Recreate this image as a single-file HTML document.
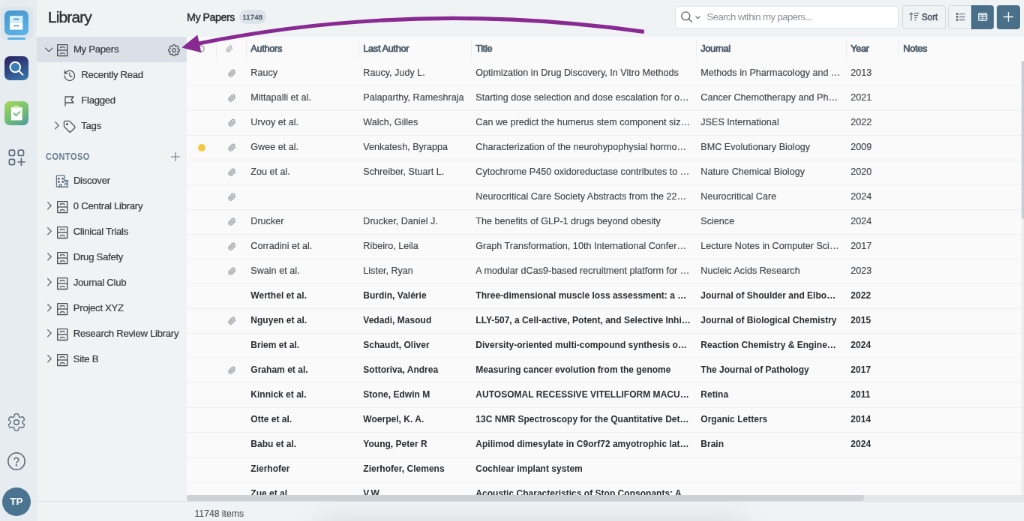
<!DOCTYPE html>
<html><head><meta charset="utf-8">
<style>
*{box-sizing:border-box;margin:0;padding:0}
html,body{width:1024px;height:521px;overflow:hidden;background:#eff3f4}
body{font-family:"Liberation Sans",sans-serif;position:relative}
#root{position:absolute;left:0;top:0;width:1365.33px;height:694.67px;transform:scale(0.75);transform-origin:0 0;overflow:hidden;background:#eff3f4;will-change:transform}
.abs{position:absolute}
.t{position:absolute;white-space:nowrap;line-height:1}
.ic{position:absolute;overflow:visible}
#table{position:absolute;left:249px;top:49px;width:1116.33px;height:619px;background:#fafafa;overflow:hidden}
.row{position:absolute;left:0;width:1116.33px;height:33px;border-bottom:1px solid #eceef0}
.c{position:absolute;top:0;height:32px;line-height:29px;white-space:nowrap;overflow:hidden;text-overflow:ellipsis;font-size:13.4px;letter-spacing:0px;color:#404448;padding-left:5.65px;padding-right:8.5px;-webkit-text-stroke:0.15px #404448;transform:scaleX(0.941);transform-origin:0 0}
.b .c{font-weight:700;font-size:13px;letter-spacing:0px;color:#2a2d31;-webkit-text-stroke:0;transform:scaleX(0.926);padding-left:5.72px;padding-right:8.64px}
.c1{left:80px;width:159.4px}
.c2{left:230px;width:159.4px}
.c3{left:380px;width:318.8px}
.c4{left:680px;width:212.5px}
.c5{left:880px;width:74.4px}
.b .c1,.b .c2{width:162px}
.b .c3{width:324px}
.b .c4{width:216px}
.b .c5{width:75.6px}
.hd{position:absolute;left:0;top:0;width:1116.33px;height:33px}
.hd .c{transform:none;padding-left:5.3px;font-size:12.8px;letter-spacing:-0.35px;color:#485866;-webkit-text-stroke:0.7px #485866;line-height:32.6px}
.sep{position:absolute;top:3.8px;width:1px;height:25.5px;background:#eaecee}
.clip{position:absolute;left:303px;top:10px;width:11px;height:11px}
.row .clip{left:55px}
.dot{position:absolute;left:15px;top:11.2px;width:10px;height:10px;border-radius:50%;background:#f6c945}
.btn{position:absolute;border:1px solid #d4d9dd;border-radius:4px;background:#eff3f4}
.dk{position:absolute;background:#4a7089;border-radius:4px}
</style></head><body>
<div id="root">
  <div class="abs" style="left:0;top:0;width:49.2px;height:694.67px;background:#e7ecf0"></div>

  <!-- rail icons -->
  <div class="abs" style="left:0.5px;top:8.7px;width:43.5px;height:44.7px;border-radius:7px;background:#dce4ec"></div>
  <div class="abs" style="left:6.1px;top:14.4px;width:31.9px;height:32.4px;border-radius:7px;background:linear-gradient(160deg,#4795cc,#5db5e8)"></div>
  <svg class="ic" style="left:13.3px;top:21.4px;width:17.4px;height:18.6px" viewBox="0 0 17.4 18.6">
    <rect x="0" y="0" width="17.4" height="9.3" fill="#d5eefb"/><rect x="0" y="9.3" width="17.4" height="9.3" fill="#fff"/>
    <path d="M6 5.8v-1.3h5.4v1.3M6 14.6v-1.3h5.4v1.3" fill="none" stroke="#3b86c0" stroke-width="1.3"/>
  </svg>
  <div class="abs" style="left:10.3px;top:50.1px;width:23.4px;height:3.4px;border-radius:2px;background:#59b2e6"></div>

  <div class="abs" style="left:5.9px;top:74.7px;width:32.1px;height:32px;border-radius:7px;background:linear-gradient(155deg,#2c1f5e 0%,#2f4a85 50%,#3b7bb2 100%)"></div>
  <svg class="ic" style="left:5.9px;top:74.7px;width:32px;height:32px" viewBox="0 0 32 32">
    <circle cx="14.3" cy="14.5" r="6.8" fill="#3b7fb6" stroke="#fff" stroke-width="2"/>
    <path d="M19.2 19.5l5.2 5.3" stroke="#fff" stroke-width="2" stroke-linecap="round"/>
  </svg>

  <div class="abs" style="left:5.9px;top:134.5px;width:32.1px;height:32px;border-radius:7px;background:linear-gradient(150deg,#a6d957 0%,#72bd74 55%,#4b9aa1 100%)"></div>
  <svg class="ic" style="left:5.9px;top:134.5px;width:32px;height:32px" viewBox="0 0 32 32">
    <rect x="8.9" y="8.1" width="14.7" height="17.3" fill="#fff"/>
    <rect x="12.4" y="5.6" width="6.8" height="3" rx="1" fill="#c6e79a"/>
    <path d="M12.5 16.2l3 3 5-5" fill="none" stroke="#6bbd6e" stroke-width="1.9" stroke-linecap="round" stroke-linejoin="round"/>
  </svg>

  <svg class="ic" style="left:11.4px;top:198.5px;width:23px;height:23px" viewBox="0 0 23 23" fill="none" stroke="#5d6b78" stroke-width="1.7">
    <rect x="1.3" y="1.2" width="7.2" height="7.3" rx="2"/><rect x="13.3" y="1.2" width="7.2" height="7.3" rx="2"/>
    <rect x="1.3" y="13.3" width="7.2" height="7.3" rx="2"/><path d="M12.5 17h10M17.4 11.8v10.4"/>
  </svg>

  <svg class="ic" style="left:8px;top:548.7px;width:28px;height:28px" viewBox="-14 -14 28 28" fill="none" stroke="#5f6b76" stroke-width="1.4" stroke-linejoin="round"><path d="M7.90 -0.00 L7.91 -0.21 L7.92 -0.42 L7.96 -0.63 L8.03 -0.84 L8.15 -1.07 L8.35 -1.32 L8.66 -1.60 L9.07 -1.93 L9.53 -2.29 L9.93 -2.66 L10.21 -3.02 L10.35 -3.36 L10.39 -3.68 L10.37 -3.98 L10.30 -4.27 L10.21 -4.54 L10.10 -4.82 L9.97 -5.08 L9.84 -5.34 L9.70 -5.60 L9.55 -5.85 L9.39 -6.10 L9.22 -6.34 L9.04 -6.57 L8.85 -6.79 L8.63 -6.99 L8.38 -7.16 L8.09 -7.28 L7.73 -7.33 L7.27 -7.27 L6.75 -7.11 L6.21 -6.89 L5.72 -6.69 L5.32 -6.57 L5.00 -6.52 L4.74 -6.53 L4.52 -6.58 L4.32 -6.65 L4.13 -6.74 L3.95 -6.84 L3.77 -6.95 L3.60 -7.07 L3.44 -7.21 L3.28 -7.37 L3.14 -7.59 L3.03 -7.89 L2.94 -8.30 L2.87 -8.82 L2.78 -9.40 L2.66 -9.93 L2.49 -10.36 L2.26 -10.65 L2.01 -10.84 L1.74 -10.97 L1.46 -11.05 L1.17 -11.11 L0.88 -11.15 L0.59 -11.18 L0.29 -11.19 L0.00 -11.20 L-0.29 -11.19 L-0.59 -11.18 L-0.88 -11.15 L-1.17 -11.11 L-1.46 -11.05 L-1.74 -10.97 L-2.01 -10.84 L-2.26 -10.65 L-2.49 -10.36 L-2.66 -9.93 L-2.78 -9.40 L-2.87 -8.82 L-2.94 -8.30 L-3.03 -7.89 L-3.14 -7.59 L-3.28 -7.37 L-3.44 -7.21 L-3.60 -7.07 L-3.77 -6.95 L-3.95 -6.84 L-4.13 -6.74 L-4.32 -6.65 L-4.52 -6.58 L-4.74 -6.53 L-5.00 -6.52 L-5.32 -6.57 L-5.72 -6.69 L-6.21 -6.89 L-6.75 -7.11 L-7.27 -7.27 L-7.73 -7.33 L-8.09 -7.28 L-8.38 -7.16 L-8.63 -6.99 L-8.85 -6.79 L-9.04 -6.57 L-9.22 -6.34 L-9.39 -6.10 L-9.55 -5.85 L-9.70 -5.60 L-9.84 -5.34 L-9.97 -5.08 L-10.10 -4.82 L-10.21 -4.54 L-10.30 -4.27 L-10.37 -3.98 L-10.39 -3.68 L-10.35 -3.36 L-10.21 -3.02 L-9.93 -2.66 L-9.53 -2.29 L-9.07 -1.93 L-8.66 -1.60 L-8.35 -1.32 L-8.15 -1.07 L-8.03 -0.84 L-7.96 -0.63 L-7.92 -0.42 L-7.91 -0.21 L-7.90 -0.00 L-7.91 0.21 L-7.92 0.42 L-7.96 0.63 L-8.03 0.84 L-8.15 1.07 L-8.35 1.32 L-8.66 1.60 L-9.07 1.93 L-9.53 2.29 L-9.93 2.66 L-10.21 3.02 L-10.35 3.36 L-10.39 3.68 L-10.37 3.98 L-10.30 4.27 L-10.21 4.54 L-10.10 4.82 L-9.97 5.08 L-9.84 5.34 L-9.70 5.60 L-9.55 5.85 L-9.39 6.10 L-9.22 6.34 L-9.04 6.57 L-8.85 6.79 L-8.63 6.99 L-8.38 7.16 L-8.09 7.28 L-7.73 7.33 L-7.27 7.27 L-6.75 7.11 L-6.21 6.89 L-5.72 6.69 L-5.32 6.57 L-5.00 6.52 L-4.74 6.53 L-4.52 6.58 L-4.32 6.65 L-4.13 6.74 L-3.95 6.84 L-3.77 6.95 L-3.60 7.07 L-3.44 7.21 L-3.28 7.37 L-3.14 7.59 L-3.03 7.89 L-2.94 8.30 L-2.87 8.82 L-2.78 9.40 L-2.66 9.93 L-2.49 10.36 L-2.26 10.65 L-2.01 10.84 L-1.74 10.97 L-1.46 11.05 L-1.17 11.11 L-0.88 11.15 L-0.59 11.18 L-0.29 11.19 L-0.00 11.20 L0.29 11.19 L0.59 11.18 L0.88 11.15 L1.17 11.11 L1.46 11.05 L1.74 10.97 L2.01 10.84 L2.26 10.65 L2.49 10.36 L2.66 9.93 L2.78 9.40 L2.87 8.82 L2.94 8.30 L3.03 7.89 L3.14 7.59 L3.28 7.37 L3.44 7.21 L3.60 7.07 L3.77 6.95 L3.95 6.84 L4.13 6.74 L4.32 6.65 L4.52 6.58 L4.74 6.53 L5.00 6.52 L5.32 6.57 L5.72 6.69 L6.21 6.89 L6.75 7.11 L7.27 7.27 L7.73 7.33 L8.09 7.28 L8.38 7.16 L8.63 6.99 L8.85 6.79 L9.04 6.57 L9.22 6.34 L9.39 6.10 L9.55 5.85 L9.70 5.60 L9.84 5.34 L9.97 5.08 L10.10 4.82 L10.21 4.54 L10.30 4.27 L10.37 3.98 L10.39 3.68 L10.35 3.36 L10.21 3.02 L9.93 2.66 L9.53 2.29 L9.07 1.93 L8.66 1.60 L8.35 1.32 L8.15 1.07 L8.03 0.84 L7.96 0.63 L7.92 0.42 L7.91 0.21Z"/><circle cx="0" cy="0" r="3.3"/></svg>
  <svg class="ic" style="left:9.9px;top:602.7px;width:24px;height:24px" viewBox="0 0 24 24" fill="none" stroke="#5f6b76" stroke-width="1.5" stroke-linecap="round"><circle cx="12" cy="12" r="11.2"/><path d="M9.1 9.3a3 3 0 0 1 5.8 1c0 2-3 2.7-3 3.9"/><circle cx="11.9" cy="17.3" r=".5" fill="#5f6b76"/></svg>
  <div class="abs" style="left:3px;top:649.8px;width:38px;height:38px;border-radius:50%;background:#4a7490"></div>
  <div class="t" style="left:3px;top:662px;width:38px;text-align:center;font-size:13.5px;font-weight:700;color:#fff">TP</div>

  <!-- sidebar -->
  <div class="t" style="left:64.00px;top:12.42px;font-size:21px;font-weight:400;color:#2a2e32;letter-spacing:-0.9px;-webkit-text-stroke:0.4px #2a2e32;">Library</div>
  <div class="abs" style="left:49.2px;top:49.3px;width:200px;height:33.4px;background:#d9e0e7"></div>
  <svg class="ic" style="left:60px;top:62.8px;width:11px;height:6.5px" viewBox="0 0 11 6.5" fill="none" stroke="#5b6167" stroke-width="1.2"><path d="M0.5 0.5l5 5-5 5" transform="rotate(90 5.5 3.25) translate(2.5 -2)"/></svg>
  <svg class="ic" style="left:75.7px;top:58.7px;width:14.4px;height:16.2px" viewBox="0 0 14.4 16.2" fill="none" stroke="#4b5056" stroke-width="1.35"><rect x="0.68" y="0.68" width="13.04" height="14.84" rx="0.25"/><path d="M0.68 8h13.04"/><path d="M4.3 5.2C4.3 3.9 5 3.6 7.2 3.6S10.1 3.9 10.1 5.2M4.3 13.3C4.3 12 5 11.7 7.2 11.7S10.1 12 10.1 13.3" stroke-width="1.3"/></svg>
  <div class="t" style="left:97.90px;top:59.33px;font-size:13.2px;font-weight:400;color:#373b40;letter-spacing:-0.3px;-webkit-text-stroke:0.22px #373b40;">My Papers</div>
  <svg class="ic" style="left:222.1px;top:56.75px;width:20px;height:20px" viewBox="-10 -10 20 20" fill="none" stroke="#50565c" stroke-width="1.3" stroke-linejoin="round"><path d="M7.30 -0.00 L7.30 -0.19 L7.28 -0.38 L7.26 -0.57 L7.22 -0.76 L7.16 -0.94 L7.05 -1.12 L6.88 -1.27 L6.61 -1.41 L6.27 -1.50 L5.90 -1.58 L5.58 -1.65 L5.34 -1.73 L5.17 -1.83 L5.06 -1.94 L4.99 -2.07 L4.95 -2.20 L4.95 -2.36 L5.00 -2.55 L5.11 -2.78 L5.29 -3.05 L5.50 -3.37 L5.67 -3.68 L5.76 -3.96 L5.78 -4.20 L5.73 -4.39 L5.64 -4.57 L5.54 -4.73 L5.42 -4.88 L5.29 -5.02 L5.16 -5.16 L5.02 -5.29 L4.88 -5.42 L4.73 -5.54 L4.57 -5.64 L4.39 -5.73 L4.20 -5.78 L3.96 -5.76 L3.68 -5.67 L3.37 -5.50 L3.05 -5.29 L2.78 -5.11 L2.55 -5.00 L2.36 -4.95 L2.20 -4.95 L2.07 -4.99 L1.94 -5.06 L1.83 -5.17 L1.73 -5.34 L1.65 -5.58 L1.58 -5.90 L1.50 -6.27 L1.41 -6.61 L1.27 -6.88 L1.12 -7.05 L0.94 -7.16 L0.76 -7.22 L0.57 -7.26 L0.38 -7.28 L0.19 -7.30 L0.00 -7.30 L-0.19 -7.30 L-0.38 -7.28 L-0.57 -7.26 L-0.76 -7.22 L-0.94 -7.16 L-1.12 -7.05 L-1.27 -6.88 L-1.41 -6.61 L-1.50 -6.27 L-1.58 -5.90 L-1.65 -5.58 L-1.73 -5.34 L-1.83 -5.17 L-1.94 -5.06 L-2.07 -4.99 L-2.20 -4.95 L-2.36 -4.95 L-2.55 -5.00 L-2.78 -5.11 L-3.05 -5.29 L-3.37 -5.50 L-3.68 -5.67 L-3.96 -5.76 L-4.20 -5.78 L-4.39 -5.73 L-4.57 -5.64 L-4.73 -5.54 L-4.88 -5.42 L-5.02 -5.29 L-5.16 -5.16 L-5.29 -5.02 L-5.42 -4.88 L-5.54 -4.73 L-5.64 -4.57 L-5.73 -4.39 L-5.78 -4.20 L-5.76 -3.96 L-5.67 -3.68 L-5.50 -3.37 L-5.29 -3.05 L-5.11 -2.78 L-5.00 -2.55 L-4.95 -2.36 L-4.95 -2.20 L-4.99 -2.07 L-5.06 -1.94 L-5.17 -1.83 L-5.34 -1.73 L-5.58 -1.65 L-5.90 -1.58 L-6.27 -1.50 L-6.61 -1.41 L-6.88 -1.27 L-7.05 -1.12 L-7.16 -0.94 L-7.22 -0.76 L-7.26 -0.57 L-7.28 -0.38 L-7.30 -0.19 L-7.30 -0.00 L-7.30 0.19 L-7.28 0.38 L-7.26 0.57 L-7.22 0.76 L-7.16 0.94 L-7.05 1.12 L-6.88 1.27 L-6.61 1.41 L-6.27 1.50 L-5.90 1.58 L-5.58 1.65 L-5.34 1.73 L-5.17 1.83 L-5.06 1.94 L-4.99 2.07 L-4.95 2.20 L-4.95 2.36 L-5.00 2.55 L-5.11 2.78 L-5.29 3.05 L-5.50 3.37 L-5.67 3.68 L-5.76 3.96 L-5.78 4.20 L-5.73 4.39 L-5.64 4.57 L-5.54 4.73 L-5.42 4.88 L-5.29 5.02 L-5.16 5.16 L-5.02 5.29 L-4.88 5.42 L-4.73 5.54 L-4.57 5.64 L-4.39 5.73 L-4.20 5.78 L-3.96 5.76 L-3.68 5.67 L-3.37 5.50 L-3.05 5.29 L-2.78 5.11 L-2.55 5.00 L-2.36 4.95 L-2.20 4.95 L-2.07 4.99 L-1.94 5.06 L-1.83 5.17 L-1.73 5.34 L-1.65 5.58 L-1.58 5.90 L-1.50 6.27 L-1.41 6.61 L-1.27 6.88 L-1.12 7.05 L-0.94 7.16 L-0.76 7.22 L-0.57 7.26 L-0.38 7.28 L-0.19 7.30 L-0.00 7.30 L0.19 7.30 L0.38 7.28 L0.57 7.26 L0.76 7.22 L0.94 7.16 L1.12 7.05 L1.27 6.88 L1.41 6.61 L1.50 6.27 L1.58 5.90 L1.65 5.58 L1.73 5.34 L1.83 5.17 L1.94 5.06 L2.07 4.99 L2.20 4.95 L2.36 4.95 L2.55 5.00 L2.78 5.11 L3.05 5.29 L3.37 5.50 L3.68 5.67 L3.96 5.76 L4.20 5.78 L4.39 5.73 L4.57 5.64 L4.73 5.54 L4.88 5.42 L5.02 5.29 L5.16 5.16 L5.29 5.02 L5.42 4.88 L5.54 4.73 L5.64 4.57 L5.73 4.39 L5.78 4.20 L5.76 3.96 L5.67 3.68 L5.50 3.37 L5.29 3.05 L5.11 2.78 L5.00 2.55 L4.95 2.36 L4.95 2.20 L4.99 2.07 L5.06 1.94 L5.17 1.83 L5.34 1.73 L5.58 1.65 L5.90 1.58 L6.27 1.50 L6.61 1.41 L6.88 1.27 L7.05 1.12 L7.16 0.94 L7.22 0.76 L7.26 0.57 L7.28 0.38 L7.30 0.19Z"/><circle cx="0" cy="0" r="2.3"/></svg>

  <svg class="ic" style="left:84.4px;top:92.3px;width:17.8px;height:17.8px" viewBox="0 0 24 24" fill="none" stroke="#4b5056" stroke-width="1.7" stroke-linecap="round" stroke-linejoin="round"><path d="M3 12a9 9 0 1 0 9-9 9.75 9.75 0 0 0-6.74 2.74L3 8"/><path d="M3 3v5h5"/><path d="M12 7v5l4 2"/></svg>
  <div class="t" style="left:108.30px;top:92.93px;font-size:13.2px;font-weight:400;color:#373b40;letter-spacing:-0.3px;-webkit-text-stroke:0.22px #373b40;">Recently Read</div>

  <svg class="ic" style="left:86.3px;top:127.8px;width:13px;height:14px" viewBox="0 0 13 14" fill="none" stroke="#4b5056" stroke-width="1.3" stroke-linejoin="round"><path d="M1 13.5V1h11l-3 4 3 4H1"/></svg>
  <div class="t" style="left:108.30px;top:126.93px;font-size:13.2px;font-weight:400;color:#373b40;letter-spacing:-0.3px;-webkit-text-stroke:0.22px #373b40;">Flagged</div>

  <svg class="ic" style="left:72.9px;top:162.1px;width:6px;height:10.5px" viewBox="0 0 6 10.5" fill="none" stroke="#60666c" stroke-width="1.25" stroke-linecap="round"><path d="M0.7 0.7l4.6 4.55-4.6 4.55"/></svg>
  <svg class="ic" style="left:83.95px;top:159.65px;width:17.4px;height:17.4px" viewBox="0 0 24 24" fill="none" stroke="#4b5056" stroke-width="1.85" stroke-linecap="round" stroke-linejoin="round"><path d="M12.59 2.59A2 2 0 0 0 11.17 2H4a2 2 0 0 0-2 2v7.17a2 2 0 0 0 .59 1.42l8.7 8.7a2.43 2.43 0 0 0 3.41 0l6.59-6.59a2.43 2.43 0 0 0 0-3.41z"/><circle cx="7.5" cy="7.5" r="1.2"/></svg>
  <div class="t" style="left:108.30px;top:160.93px;font-size:13.2px;font-weight:400;color:#373b40;letter-spacing:-0.3px;-webkit-text-stroke:0.22px #373b40;">Tags</div>

  <div class="t" style="left:61.00px;top:201.90px;font-size:13px;font-weight:700;color:#687d8e;letter-spacing:0.6px;transform:scaleX(0.845);transform-origin:0 0">CONTOSO</div>
  <svg class="ic" style="left:228px;top:202.7px;width:12px;height:12px" viewBox="0 0 12 12" fill="none" stroke="#6d7780" stroke-width="1.1"><path d="M6 0v12M0 6h12"/></svg>

  <svg class="ic" style="left:74px;top:233px;width:17.5px;height:17.5px" viewBox="0 0 17.5 17.5" fill="none" stroke="#5b6f80" stroke-width="1.3"><rect x="1.45" y="1.15" width="10.7" height="15.1" rx="0.8" fill="#fbfcfc"/><path d="M12.1 7.75H16.25V16.25H12.1" fill="#fbfcfc"/><path d="M5.2 16.25V12.9H8.2V16.25"/><path d="M12.6 9.6h3.2" stroke-width="1"/><g fill="#5b6f80" stroke="none"><rect x="3" y="4" width="2.7" height="2.6"/><rect x="8.2" y="4" width="2.7" height="2.6"/><rect x="3" y="8.1" width="2.7" height="2.6"/><rect x="8.2" y="8.1" width="2.7" height="2.6"/><circle cx="14" cy="12.2" r="1.3"/></g></svg>
  <div class="t" style="left:97.90px;top:234.03px;font-size:13.2px;font-weight:400;color:#373b40;letter-spacing:-0.3px;-webkit-text-stroke:0.22px #373b40;">Discover</div>
  <svg class="ic" style="left:62.6px;top:268.79999999999995px;width:6px;height:10.5px" viewBox="0 0 6 10.5" fill="none" stroke="#60666c" stroke-width="1.25" stroke-linecap="round"><path d="M0.7 0.7l4.6 4.55-4.6 4.55"/></svg><svg class="ic" style="left:75.95px;top:267.7px;width:14.4px;height:16.2px" viewBox="0 0 14.4 16.2" fill="none" stroke="#4b5056" stroke-width="1.35"><rect x="0.68" y="0.68" width="13.04" height="14.84" rx="0.25"/><path d="M0.68 8h13.04"/><path d="M4.3 5.2C4.3 3.9 5 3.6 7.2 3.6S10.1 3.9 10.1 5.2M4.3 13.3C4.3 12 5 11.7 7.2 11.7S10.1 12 10.1 13.3" stroke-width="1.3"/></svg><div class="t" style="left:97.80px;top:268.23px;font-size:13.2px;font-weight:400;color:#373b40;letter-spacing:-0.3px;-webkit-text-stroke:0.22px #373b40;">0 Central Library</div><svg class="ic" style="left:62.6px;top:302.79999999999995px;width:6px;height:10.5px" viewBox="0 0 6 10.5" fill="none" stroke="#60666c" stroke-width="1.25" stroke-linecap="round"><path d="M0.7 0.7l4.6 4.55-4.6 4.55"/></svg><svg class="ic" style="left:75.95px;top:301.7px;width:14.4px;height:16.2px" viewBox="0 0 14.4 16.2" fill="none" stroke="#4b5056" stroke-width="1.35"><rect x="0.68" y="0.68" width="13.04" height="14.84" rx="0.25"/><path d="M0.68 8h13.04"/><path d="M4.3 5.2C4.3 3.9 5 3.6 7.2 3.6S10.1 3.9 10.1 5.2M4.3 13.3C4.3 12 5 11.7 7.2 11.7S10.1 12 10.1 13.3" stroke-width="1.3"/></svg><div class="t" style="left:97.80px;top:302.23px;font-size:13.2px;font-weight:400;color:#373b40;letter-spacing:-0.3px;-webkit-text-stroke:0.22px #373b40;">Clinical Trials</div><svg class="ic" style="left:62.6px;top:336.79999999999995px;width:6px;height:10.5px" viewBox="0 0 6 10.5" fill="none" stroke="#60666c" stroke-width="1.25" stroke-linecap="round"><path d="M0.7 0.7l4.6 4.55-4.6 4.55"/></svg><svg class="ic" style="left:75.95px;top:335.7px;width:14.4px;height:16.2px" viewBox="0 0 14.4 16.2" fill="none" stroke="#4b5056" stroke-width="1.35"><rect x="0.68" y="0.68" width="13.04" height="14.84" rx="0.25"/><path d="M0.68 8h13.04"/><path d="M4.3 5.2C4.3 3.9 5 3.6 7.2 3.6S10.1 3.9 10.1 5.2M4.3 13.3C4.3 12 5 11.7 7.2 11.7S10.1 12 10.1 13.3" stroke-width="1.3"/></svg><div class="t" style="left:97.80px;top:336.23px;font-size:13.2px;font-weight:400;color:#373b40;letter-spacing:-0.3px;-webkit-text-stroke:0.22px #373b40;">Drug Safety</div><svg class="ic" style="left:62.6px;top:370.79999999999995px;width:6px;height:10.5px" viewBox="0 0 6 10.5" fill="none" stroke="#60666c" stroke-width="1.25" stroke-linecap="round"><path d="M0.7 0.7l4.6 4.55-4.6 4.55"/></svg><svg class="ic" style="left:75.95px;top:369.7px;width:14.4px;height:16.2px" viewBox="0 0 14.4 16.2" fill="none" stroke="#4b5056" stroke-width="1.35"><rect x="0.68" y="0.68" width="13.04" height="14.84" rx="0.25"/><path d="M0.68 8h13.04"/><path d="M4.3 5.2C4.3 3.9 5 3.6 7.2 3.6S10.1 3.9 10.1 5.2M4.3 13.3C4.3 12 5 11.7 7.2 11.7S10.1 12 10.1 13.3" stroke-width="1.3"/></svg><div class="t" style="left:97.80px;top:370.23px;font-size:13.2px;font-weight:400;color:#373b40;letter-spacing:-0.3px;-webkit-text-stroke:0.22px #373b40;">Journal Club</div><svg class="ic" style="left:62.6px;top:404.79999999999995px;width:6px;height:10.5px" viewBox="0 0 6 10.5" fill="none" stroke="#60666c" stroke-width="1.25" stroke-linecap="round"><path d="M0.7 0.7l4.6 4.55-4.6 4.55"/></svg><svg class="ic" style="left:75.95px;top:403.7px;width:14.4px;height:16.2px" viewBox="0 0 14.4 16.2" fill="none" stroke="#4b5056" stroke-width="1.35"><rect x="0.68" y="0.68" width="13.04" height="14.84" rx="0.25"/><path d="M0.68 8h13.04"/><path d="M4.3 5.2C4.3 3.9 5 3.6 7.2 3.6S10.1 3.9 10.1 5.2M4.3 13.3C4.3 12 5 11.7 7.2 11.7S10.1 12 10.1 13.3" stroke-width="1.3"/></svg><div class="t" style="left:97.80px;top:404.23px;font-size:13.2px;font-weight:400;color:#373b40;letter-spacing:-0.3px;-webkit-text-stroke:0.22px #373b40;">Project XYZ</div><svg class="ic" style="left:62.6px;top:438.79999999999995px;width:6px;height:10.5px" viewBox="0 0 6 10.5" fill="none" stroke="#60666c" stroke-width="1.25" stroke-linecap="round"><path d="M0.7 0.7l4.6 4.55-4.6 4.55"/></svg><svg class="ic" style="left:75.95px;top:437.7px;width:14.4px;height:16.2px" viewBox="0 0 14.4 16.2" fill="none" stroke="#4b5056" stroke-width="1.35"><rect x="0.68" y="0.68" width="13.04" height="14.84" rx="0.25"/><path d="M0.68 8h13.04"/><path d="M4.3 5.2C4.3 3.9 5 3.6 7.2 3.6S10.1 3.9 10.1 5.2M4.3 13.3C4.3 12 5 11.7 7.2 11.7S10.1 12 10.1 13.3" stroke-width="1.3"/></svg><div class="t" style="left:97.80px;top:438.23px;font-size:13.2px;font-weight:400;color:#373b40;letter-spacing:-0.3px;-webkit-text-stroke:0.22px #373b40;">Research Review Library</div><svg class="ic" style="left:62.6px;top:472.79999999999995px;width:6px;height:10.5px" viewBox="0 0 6 10.5" fill="none" stroke="#60666c" stroke-width="1.25" stroke-linecap="round"><path d="M0.7 0.7l4.6 4.55-4.6 4.55"/></svg><svg class="ic" style="left:75.95px;top:471.7px;width:14.4px;height:16.2px" viewBox="0 0 14.4 16.2" fill="none" stroke="#4b5056" stroke-width="1.35"><rect x="0.68" y="0.68" width="13.04" height="14.84" rx="0.25"/><path d="M0.68 8h13.04"/><path d="M4.3 5.2C4.3 3.9 5 3.6 7.2 3.6S10.1 3.9 10.1 5.2M4.3 13.3C4.3 12 5 11.7 7.2 11.7S10.1 12 10.1 13.3" stroke-width="1.3"/></svg><div class="t" style="left:97.80px;top:472.23px;font-size:13.2px;font-weight:400;color:#373b40;letter-spacing:-0.3px;-webkit-text-stroke:0.22px #373b40;">Site B</div>

  <!-- main header -->
  <div class="t" style="left:249.00px;top:15.80px;font-size:14.3px;font-weight:400;color:#2a2e33;letter-spacing:-0.5px;-webkit-text-stroke:0.4px #2a2e33;">My Papers</div>
  <div class="abs" style="left:318.7px;top:13.3px;width:36.3px;height:19px;border-radius:9.5px;background:#dbe2e8"></div>
  <div class="t" style="left:323.60px;top:18.39px;font-size:9.7px;font-weight:400;color:#4e5c69;letter-spacing:0.05px;-webkit-text-stroke:0.4px #4e5c69;">11748</div>

  <div class="abs" style="left:899.6px;top:7.9px;width:298.5px;height:30px;border:1px solid #dde2e6;border-radius:4px;background:#fff"></div>
  <svg class="ic" style="left:907.5px;top:15px;width:15px;height:15px" viewBox="0 0 15 15" fill="none" stroke="#5b6167" stroke-width="1.3" stroke-linecap="round"><circle cx="6.3" cy="6.3" r="5.5"/><path d="M10.3 10.3l4 4"/></svg>
  <svg class="ic" style="left:926.6px;top:20.8px;width:7px;height:5px" viewBox="0 0 7 5" fill="none" stroke="#5b6167" stroke-width="1.1"><path d="M0.5 0.6l3 3 3-3"/></svg>
  <div class="t" style="left:942.60px;top:15.90px;font-size:13.2px;font-weight:400;color:#8c9196;letter-spacing:-0.6px;">Search within my papers...</div>

  <div class="btn" style="left:1202.9px;top:7px;width:57.7px;height:32px"></div>
  <svg class="ic" style="left:1210px;top:15px;width:18px;height:14px" viewBox="1210 15 18 14" fill="none" stroke="#5d6974" stroke-width="1.15"><path d="M1215 27.6V17.4M1212.6 19.6l2.4-2.4 2.4 2.4"/><path d="M1219 17.6h6.4M1219 20.6h5M1219.4 23.6h3M1219.6 26.6h1.8" stroke-width="1.2"/></svg>
  <div class="t" style="left:1228.80px;top:16.68px;font-size:12.9px;font-weight:400;color:#44515c;letter-spacing:0px;-webkit-text-stroke:0.55px #44515c;transform:scaleX(0.9);transform-origin:0 0">Sort</div>

  <div class="btn" style="left:1264.3px;top:7px;width:60.9px;height:32px"></div>
  <div class="dk" style="left:1295.2px;top:7px;width:30px;height:32px;border-top-left-radius:0;border-bottom-left-radius:0"></div>
  <svg class="ic" style="left:1274.5px;top:16.8px;width:12px;height:11px" viewBox="0 0 12 11"><rect x="0" y="0.3" width="2.6" height="2.6" fill="#5a656e"/><rect x="0" y="4.2" width="2.6" height="2.6" fill="#5a656e"/><rect x="0" y="8.2" width="2.6" height="2.6" fill="#5a656e"/><path d="M4.2 1.6h7.4M4.2 5.5h7.4M4.2 9.5h7.4" stroke="#7c858c" stroke-width="1.3"/></svg>
  <svg class="ic" style="left:1304.1px;top:16.8px;width:12.4px;height:11.1px" viewBox="0 0 12.4 11.1" fill="none" stroke="#e8eef2" stroke-width="1.2"><rect x="0.6" y="0.6" width="11.2" height="9.9" rx="1.6"/><path d="M0.6 2.6h11.2" stroke-width="1.5"/><path d="M0.6 5.2h11.2M0.6 8h11.2M6.2 3v7.5"/></svg>
  <div class="dk" style="left:1328.5px;top:7px;width:31.8px;height:32px"></div>
  <svg class="ic" style="left:1337.9px;top:16.2px;width:13px;height:13px" viewBox="0 0 13 13" fill="none" stroke="#fff" stroke-width="1.3"><path d="M6.5 0v13M0 6.5h13"/></svg>

  <!-- table -->
  <div id="table">
    <div class="hd">
      <div class="sep" style="left:38.8px"></div><div class="sep" style="left:78.8px"></div><div class="sep" style="left:228.8px"></div><div class="sep" style="left:378.8px"></div><div class="sep" style="left:678.8px"></div><div class="sep" style="left:878.8px"></div><div class="sep" style="left:948.8px"></div>
      <svg class="ic" style="left:13.9px;top:10.7px;width:10px;height:10px" viewBox="0 0 10 10" fill="none" stroke="#8f959a" stroke-width="1.2"><circle cx="5" cy="5" r="4.2"/></svg>
      <svg class="clip" style="left:52.4px;top:11px;width:10px;height:10px" viewBox="0 0 24 24" fill="none" stroke="#8e9296" stroke-width="2.3" stroke-linecap="round" stroke-linejoin="round"><path d="m21.44 11.05-9.19 9.19a6 6 0 0 1-8.49-8.49l8.57-8.57A4 4 0 1 1 18 8.84l-8.59 8.57a2 2 0 0 1-2.83-2.83l8.49-8.48"/></svg>
      <div class="c c1">Authors</div><div class="c c2">Last Author</div><div class="c c3">Title</div><div class="c c4">Journal</div><div class="c c5">Year</div><div class="c" style="left:950px;width:100px">Notes</div>
    </div>
    <div class="row" style="top:33px"><svg class="clip" viewBox="0 0 24 24" fill="none" stroke="#8e9296" stroke-width="2.3" stroke-linecap="round" stroke-linejoin="round"><path d="m21.44 11.05-9.19 9.19a6 6 0 0 1-8.49-8.49l8.57-8.57A4 4 0 1 1 18 8.84l-8.59 8.57a2 2 0 0 1-2.83-2.83l8.49-8.48"/></svg><div class="c c1">Raucy</div><div class="c c2">Raucy, Judy L.</div><div class="c c3">Optimization in Drug Discovery, In Vitro Methods</div><div class="c c4">Methods in Pharmacology and Toxicology</div><div class="c c5">2013</div></div><div class="row" style="top:66px"><svg class="clip" viewBox="0 0 24 24" fill="none" stroke="#8e9296" stroke-width="2.3" stroke-linecap="round" stroke-linejoin="round"><path d="m21.44 11.05-9.19 9.19a6 6 0 0 1-8.49-8.49l8.57-8.57A4 4 0 1 1 18 8.84l-8.59 8.57a2 2 0 0 1-2.83-2.83l8.49-8.48"/></svg><div class="c c1">Mittapalli et al.</div><div class="c c2">Palaparthy, Rameshraja</div><div class="c c3">Starting dose selection and dose escalation for oncology</div><div class="c c4">Cancer Chemotherapy and Pharmacology</div><div class="c c5">2021</div></div><div class="row" style="top:99px"><svg class="clip" viewBox="0 0 24 24" fill="none" stroke="#8e9296" stroke-width="2.3" stroke-linecap="round" stroke-linejoin="round"><path d="m21.44 11.05-9.19 9.19a6 6 0 0 1-8.49-8.49l8.57-8.57A4 4 0 1 1 18 8.84l-8.59 8.57a2 2 0 0 1-2.83-2.83l8.49-8.48"/></svg><div class="c c1">Urvoy et al.</div><div class="c c2">Walch, Gilles</div><div class="c c3">Can we predict the humerus stem component size in reverse shoulder arthroplasty</div><div class="c c4">JSES International</div><div class="c c5">2022</div></div><div class="row" style="top:132px"><div class="dot"></div><svg class="clip" viewBox="0 0 24 24" fill="none" stroke="#8e9296" stroke-width="2.3" stroke-linecap="round" stroke-linejoin="round"><path d="m21.44 11.05-9.19 9.19a6 6 0 0 1-8.49-8.49l8.57-8.57A4 4 0 1 1 18 8.84l-8.59 8.57a2 2 0 0 1-2.83-2.83l8.49-8.48"/></svg><div class="c c1">Gwee et al.</div><div class="c c2">Venkatesh, Byrappa</div><div class="c c3">Characterization of the neurohypophysial hormone gene loci</div><div class="c c4">BMC Evolutionary Biology</div><div class="c c5">2009</div></div><div class="row" style="top:165px"><svg class="clip" viewBox="0 0 24 24" fill="none" stroke="#8e9296" stroke-width="2.3" stroke-linecap="round" stroke-linejoin="round"><path d="m21.44 11.05-9.19 9.19a6 6 0 0 1-8.49-8.49l8.57-8.57A4 4 0 1 1 18 8.84l-8.59 8.57a2 2 0 0 1-2.83-2.83l8.49-8.48"/></svg><div class="c c1">Zou et al.</div><div class="c c2">Schreiber, Stuart L.</div><div class="c c3">Cytochrome P450 oxidoreductase contributes to phospholipid</div><div class="c c4">Nature Chemical Biology</div><div class="c c5">2020</div></div><div class="row" style="top:198px"><svg class="clip" viewBox="0 0 24 24" fill="none" stroke="#8e9296" stroke-width="2.3" stroke-linecap="round" stroke-linejoin="round"><path d="m21.44 11.05-9.19 9.19a6 6 0 0 1-8.49-8.49l8.57-8.57A4 4 0 1 1 18 8.84l-8.59 8.57a2 2 0 0 1-2.83-2.83l8.49-8.48"/></svg><div class="c c1"></div><div class="c c2"></div><div class="c c3">Neurocritical Care Society Abstracts from the 22nd Annual Meeting</div><div class="c c4">Neurocritical Care</div><div class="c c5">2024</div></div><div class="row" style="top:231px"><svg class="clip" viewBox="0 0 24 24" fill="none" stroke="#8e9296" stroke-width="2.3" stroke-linecap="round" stroke-linejoin="round"><path d="m21.44 11.05-9.19 9.19a6 6 0 0 1-8.49-8.49l8.57-8.57A4 4 0 1 1 18 8.84l-8.59 8.57a2 2 0 0 1-2.83-2.83l8.49-8.48"/></svg><div class="c c1">Drucker</div><div class="c c2">Drucker, Daniel J.</div><div class="c c3">The benefits of GLP-1 drugs beyond obesity</div><div class="c c4">Science</div><div class="c c5">2024</div></div><div class="row" style="top:264px"><svg class="clip" viewBox="0 0 24 24" fill="none" stroke="#8e9296" stroke-width="2.3" stroke-linecap="round" stroke-linejoin="round"><path d="m21.44 11.05-9.19 9.19a6 6 0 0 1-8.49-8.49l8.57-8.57A4 4 0 1 1 18 8.84l-8.59 8.57a2 2 0 0 1-2.83-2.83l8.49-8.48"/></svg><div class="c c1">Corradini et al.</div><div class="c c2">Ribeiro, Leila</div><div class="c c3">Graph Transformation, 10th International Conference</div><div class="c c4">Lecture Notes in Computer Science</div><div class="c c5">2017</div></div><div class="row" style="top:297px"><svg class="clip" viewBox="0 0 24 24" fill="none" stroke="#8e9296" stroke-width="2.3" stroke-linecap="round" stroke-linejoin="round"><path d="m21.44 11.05-9.19 9.19a6 6 0 0 1-8.49-8.49l8.57-8.57A4 4 0 1 1 18 8.84l-8.59 8.57a2 2 0 0 1-2.83-2.83l8.49-8.48"/></svg><div class="c c1">Swain et al.</div><div class="c c2">Lister, Ryan</div><div class="c c3">A modular dCas9-based recruitment platform for epigenome</div><div class="c c4">Nucleic Acids Research</div><div class="c c5">2023</div></div><div class="row b" style="top:330px"><div class="c c1">Werthel et al.</div><div class="c c2">Burdin, Valérie</div><div class="c c3">Three-dimensional muscle loss assessment: a novel</div><div class="c c4">Journal of Shoulder and Elbow Surgery</div><div class="c c5">2022</div></div><div class="row b" style="top:363px"><svg class="clip" viewBox="0 0 24 24" fill="none" stroke="#8e9296" stroke-width="2.3" stroke-linecap="round" stroke-linejoin="round"><path d="m21.44 11.05-9.19 9.19a6 6 0 0 1-8.49-8.49l8.57-8.57A4 4 0 1 1 18 8.84l-8.59 8.57a2 2 0 0 1-2.83-2.83l8.49-8.48"/></svg><div class="c c1">Nguyen et al.</div><div class="c c2">Vedadi, Masoud</div><div class="c c3">LLY-507, a Cell-active, Potent, and Selective Inhibitor</div><div class="c c4">Journal of Biological Chemistry</div><div class="c c5">2015</div></div><div class="row b" style="top:396px"><div class="c c1">Briem et al.</div><div class="c c2">Schaudt, Oliver</div><div class="c c3">Diversity-oriented multi-compound synthesis optimization</div><div class="c c4">Reaction Chemistry &amp; Engineering</div><div class="c c5">2024</div></div><div class="row b" style="top:429px"><svg class="clip" viewBox="0 0 24 24" fill="none" stroke="#8e9296" stroke-width="2.3" stroke-linecap="round" stroke-linejoin="round"><path d="m21.44 11.05-9.19 9.19a6 6 0 0 1-8.49-8.49l8.57-8.57A4 4 0 1 1 18 8.84l-8.59 8.57a2 2 0 0 1-2.83-2.83l8.49-8.48"/></svg><div class="c c1">Graham et al.</div><div class="c c2">Sottoriva, Andrea</div><div class="c c3">Measuring cancer evolution from the genome</div><div class="c c4">The Journal of Pathology</div><div class="c c5">2017</div></div><div class="row b" style="top:462px"><div class="c c1">Kinnick et al.</div><div class="c c2">Stone, Edwin M</div><div class="c c3">AUTOSOMAL RECESSIVE VITELLIFORM MACULAR DYSTROPHY</div><div class="c c4">Retina</div><div class="c c5">2011</div></div><div class="row b" style="top:495px"><div class="c c1">Otte et al.</div><div class="c c2">Woerpel, K. A.</div><div class="c c3">13C NMR Spectroscopy for the Quantitative Determination</div><div class="c c4">Organic Letters</div><div class="c c5">2014</div></div><div class="row b" style="top:528px"><div class="c c1">Babu et al.</div><div class="c c2">Young, Peter R</div><div class="c c3">Apilimod dimesylate in C9orf72 amyotrophic lateral sclerosis</div><div class="c c4">Brain</div><div class="c c5">2024</div></div><div class="row b" style="top:561px"><div class="c c1">Zierhofer</div><div class="c c2">Zierhofer, Clemens</div><div class="c c3">Cochlear implant system</div><div class="c c4"></div><div class="c c5"></div></div><div class="row b" style="top:594px"><div class="c c1">Zue et al.</div><div class="c c2">V.W.</div><div class="c c3">Acoustic Characteristics of Stop Consonants: A</div><div class="c c4"></div><div class="c c5"></div></div>
    <div class="abs" style="left:0;top:611.4px;width:1116.33px;height:7.6px;background:#e5e7e9"></div><div class="abs" style="left:0;top:611.4px;width:903.3px;height:7.6px;border-radius:4px;background:#cdd2d7"></div>
    <div class="abs" style="left:1113.3px;top:32px;width:8px;height:579.4px;background:#ebedef"></div><div class="abs" style="left:1113.3px;top:32px;width:8px;height:210.5px;border-radius:3px;background:#c9ced3"></div>
  </div>
  <div class="abs" style="left:49.2px;top:668px;width:1316.33px;height:1px;background:#dde1e5"></div>
  <div class="t" style="left:259.50px;top:678.97px;font-size:12.2px;font-weight:400;color:#4d5257;letter-spacing:0px;-webkit-text-stroke:0.1px #4d5257;">11748 items</div>
  <div class="abs" style="left:430px;top:712px;width:560px;height:30px;border-radius:15px;background:#ccc;box-shadow:0 0 40px 14px rgba(0,0,0,0.13)"></div>

  <!-- annotation arrow -->
  <svg class="ic" style="left:0;top:0;width:1365px;height:695px" viewBox="0 0 1365 695">
    <path d="M858.8 42.4C661.5 14.9 460.1 18.8 264.7 58.0" fill="none" stroke="#882a92" stroke-width="5.2"/>
    <path d="M242.3 63.5L263.3 46.4L268.4 70.1Z" fill="#882a92"/>
  </svg>
</div>
</body></html>
